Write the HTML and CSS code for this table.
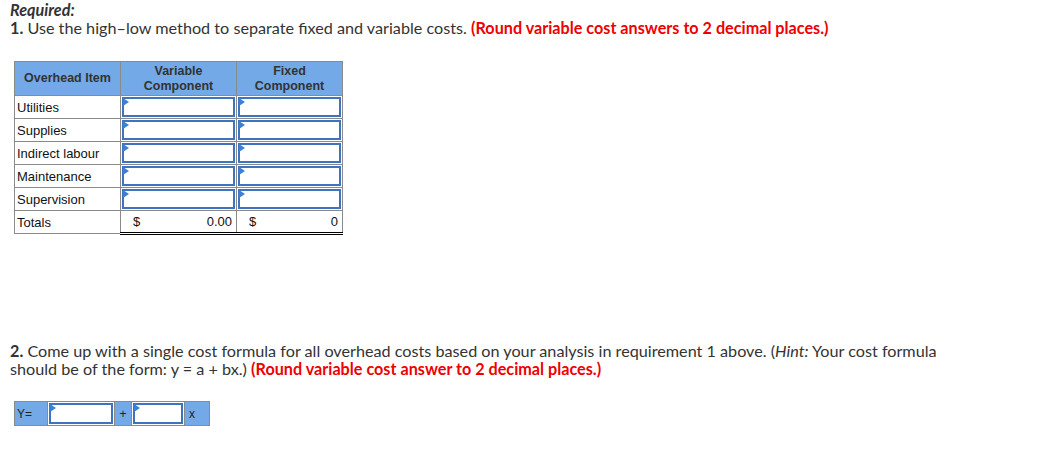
FILE: index.html
```html
<!DOCTYPE html>
<html>
<head>
<meta charset="utf-8">
<link rel="stylesheet" href="styles.css">
</head>
<body>
<div class="page">
  <p class="req">Required:</p>
  <p class="q"><b>1.</b> Use the high–low method to separate fixed and variable costs. <span class="red">(Round variable cost answers to 2 decimal places.)</span></p>

  <table class="grid">
    <tr class="head">
      <th class="c1">Overhead Item</th>
      <th class="c2">Variable<br>Component</th>
      <th class="c3">Fixed<br>Component</th>
    </tr>
    <tr><td class="lbl">Utilities</td><td class="in"><div class="box"></div></td><td class="in"><div class="box"></div></td></tr>
    <tr><td class="lbl">Supplies</td><td class="in"><div class="box"></div></td><td class="in"><div class="box"></div></td></tr>
    <tr><td class="lbl">Indirect labour</td><td class="in"><div class="box"></div></td><td class="in"><div class="box"></div></td></tr>
    <tr><td class="lbl">Maintenance</td><td class="in"><div class="box"></div></td><td class="in"><div class="box"></div></td></tr>
    <tr><td class="lbl">Supervision</td><td class="in"><div class="box"></div></td><td class="in"><div class="box"></div></td></tr>
    <tr class="tot"><td class="lbl">Totals</td><td class="val"><span>$</span><span>0.00</span></td><td class="val"><span>$</span><span>0</span></td></tr>
  </table>

  <p class="q q2"><b>2.</b> Come up with a single cost formula for all overhead costs based on your analysis in requirement 1 above. (<i>Hint:</i> Your cost formula should be of the form: y = a + bx.) <span class="red">(Round variable cost answer to 2 decimal places.)</span></p>

  <table class="formula">
    <tr>
      <td class="blue y">Y=</td>
      <td class="in fa"><div class="box"></div></td>
      <td class="blue op">+</td>
      <td class="in fb"><div class="box"></div></td>
      <td class="blue x">x</td>
    </tr>
  </table>
</div>
</body>
</html>
```

FILE: styles.css
```css
html, body {
  margin: 0;
  padding: 0;
  background: #fff;
}
.page {
  padding: 1px 10px 0 10px;
  font-family: "Lato", "Open Sans", sans-serif;
  font-size: 16.2px;
  color: #333;
}
p {
  margin: 0;
  line-height: 18px;
}
.req {
  font-weight: bold;
  font-style: italic;
}
.q b {
  font-weight: bold;
}
.red {
  color: #ee0000;
  font-weight: bold;
}
.grid {
  margin: 24px 0 0 4px;
  border-collapse: collapse;
  font-family: "Liberation Sans", Arial, sans-serif;
  font-size: 13px;
  color: #111;
}
.grid th {
  background: #72a9e6;
  border: 1px solid #8a8a8a;
  font-weight: bold;
  color: #333;
  height: 33px;
  padding: 0;
  line-height: 15px;
  font-size: 12.5px;
}
.grid .c1 { width: 105px; }
.grid .c2 { width: 115px; }
.grid .c3 { width: 105px; }
.grid tr {
  height: 23px;
}
.grid td {
  border: 1px solid #8a8a8a;
  padding: 0;
  line-height: 15px;
}
.lbl {
  padding-left: 2px !important;
}
td.in {
  padding: 1px !important;
  border-color: #8a8a8a;
}
.box {
  position: relative;
  height: 16px;
  border: 2px solid #3f72bf;
  background: #fff;
}
.box::before {
  content: "";
  position: absolute;
  left: -1px;
  top: -1px;
  border-top: 4px solid transparent;
  border-bottom: 4px solid transparent;
  border-left: 6px solid #3a7fd8;
}
.grid .tot td.val {
  border-bottom: 3px double #000;
  padding: 0 4px 0 12px;
}
.val {
  white-space: nowrap;
}
.val span:first-child { float: left; }
.val span:last-child { float: right; }
.q2 {
  margin-top: 107px;
  max-width: 945px;
}
.formula {
  margin: 23px 0 0 4px;
  border-collapse: collapse;
  font-family: "Liberation Sans", Arial, sans-serif;
  font-size: 12px;
  color: #222;
}
.formula td {
  border: 1px solid #8a8a8a;
  height: 21px;
  padding: 0;
}
.formula .blue {
  background: #72a9e6;
}
.formula .y { width: 30px; padding-left: 2px; }
.formula .op { width: 16px; text-align: center; }
.formula .x { width: 20px; padding-left: 4px; }
.formula .fa { width: 64px; padding: 1px; }
.formula .fb { width: 50px; padding: 1px; }
.formula .box { height: 17px; }
```
